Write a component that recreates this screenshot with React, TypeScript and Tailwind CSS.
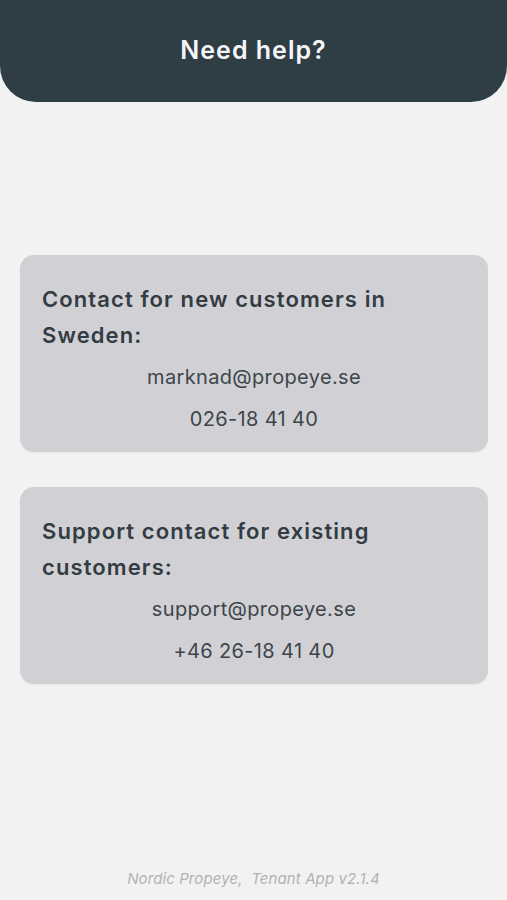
const contacts = [
  {
    id: 1,
    title: "Contact for new customers in Sweden:",
    email: "marknad@propeye.se",
    phone: "026-18 41 40",
  },
  {
    id: 2,
    title: "Support contact for existing customers:",
    email: "support@propeye.se",
    phone: "+46 26-18 41 40",
  },
];

const ContactCard = ({ title, email, phone }: (typeof contacts)[number]) => (
  <section className="rounded-[14px] bg-[#d1d1d5] pl-[22px] pr-[40px] pt-[26px] pb-[12px] shadow-[0_1px_2px_rgba(0,0,0,0.06)]">
    <h2 className="text-[22px] font-semibold leading-[36px] tracking-[1.1px] text-[#333c43]">{title}</h2>
    <div className="mt-[3px] flex flex-col items-center pl-[18px] text-[20px] leading-[42px] tracking-[0.35px] text-[#3d454b]">
      <span>{email}</span>
      <span>{phone}</span>
    </div>
  </section>
);

export default function App() {
  return (
    <div className="flex h-[900px] w-full flex-col bg-[#f2f2f2] font-['Inter','Noto_Sans',sans-serif]">
      <header className="flex h-[102px] items-center justify-center rounded-b-[36px] bg-[#2f3d45]">
        <h1 className="text-[25px] font-semibold tracking-[1px] text-[#f4f6f7]">Need help?</h1>
      </header>

      <main className="mt-[153px] flex flex-col gap-[35px] px-[20px] pr-[19px]">
        {contacts.map((c) => (
          <ContactCard key={c.id} {...c} />
        ))}
      </main>

      <footer className="mt-auto pb-[10px] text-center text-[15px] italic tracking-[0.1px] text-[#b3b3b3]">
        Nordic Propeye,&nbsp; Tenant App v2.1.4
      </footer>
    </div>
  );
}
